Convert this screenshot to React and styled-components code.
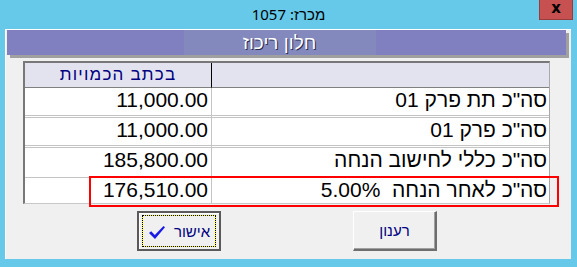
import styled, { createGlobalStyle } from 'styled-components';

const rows = [
    { label: 'סה"כ תת פרק 01', value: '11,000.00', line: 'double' },
    { label: 'סה"כ פרק 01', value: '11,000.00', line: 'double' },
    { label: 'סה"כ כללי לחישוב הנחה', value: '185,800.00', line: 'single' },
    { label: 'סה"כ לאחר הנחה  5.00%', value: '176,510.00', line: 'none' },
];

export default function App() {
    return (
        <Window>
            <GlobalStyle />
            <TitleBar>
                <span />
                <Title>מכרז: 1057</Title>
                <CloseButton>x</CloseButton>
            </TitleBar>
            <Client>
                <Banner>
                    <BannerLabel>חלון ריכוז</BannerLabel>
                </Banner>
                <GridWrap>
                    <Grid>
                        <HeadCell />
                        <HeadCell $value>בכתב הכמויות</HeadCell>
                        {rows.map((r, i) => [
                            <LabelCell key={'l' + i} $line={r.line} $last={i === rows.length - 1}>{r.label}</LabelCell>,
                            <ValueCell key={'v' + i} $line={r.line} $last={i === rows.length - 1}>{r.value}</ValueCell>,
                        ])}
                    </Grid>
                    <Highlight />
                </GridWrap>
                <Buttons>
                    <Button $default>
                        <Focus>
                            <span>אישור</span>
                            <svg width="18" height="15" viewBox="0 0 18 15">
                                <path d="M1 8 L3.2 6.3 L6.8 10 L15.5 1 L17 2.2 L7 14 Z" fill="#1a1ae6" />
                            </svg>
                        </Focus>
                    </Button>
                    <Button>רענון</Button>
                </Buttons>
            </Client>
        </Window>
    );
}

const GlobalStyle = createGlobalStyle`
    body {
        margin: 0;
        background: #66c9ea;
        font-family: "Liberation Sans", Arial, sans-serif;
    }
`;

const Window = styled.div`
    width: 577px;
    height: 267px;
    background: #66c9ea;
    direction: rtl;
    overflow: hidden;
`;

const TitleBar = styled.div`
    height: 29px;
    display: grid;
    grid-template-columns: 1fr auto 1fr;
    direction: ltr;
`;

const Title = styled.div`
    direction: rtl;
    font-size: 15px;
    color: #000;
    line-height: 28px;
    font-family: "Noto Sans", "Liberation Sans", sans-serif;
`;

const CloseButton = styled.div`
    justify-self: end;
    align-self: start;
    margin-right: 4px;
    width: 34px;
    height: 20px;
    box-sizing: border-box;
    background: #c75050;
    border: 1px solid #9a3c3c;
    border-top: none;
    color: #000;
    font: bold 15px "DejaVu Sans", sans-serif;
    text-align: center;
    line-height: 17px;
`;

const Client = styled.div`
    margin: 0 6px 0 5px;
    height: 229px;
    background: #f0f0f0;
    border-top: 1px solid #fff;
    border-left: 1px solid #fff;
    direction: ltr;
`;

const Banner = styled.div`
    margin: 0 5px 0 1px;
    height: 25px;
    background: #8080c0;
    box-shadow: 3px 3px 0 #a0a0a0;
    display: flex;
    justify-content: center;
`;

const BannerLabel = styled.div`
    width: 192px;
    margin-right: 14px;
    background: #8489bd;
    color: #fff;
    text-align: center;
    direction: rtl;
    font-size: 19px;
    line-height: 25px;
    text-shadow: 1px 1px 0 #2a2a50;
`;

const GridWrap = styled.div`
    position: relative;
    margin: 6px 21px 0 17px;
`;

const Grid = styled.div`
    direction: rtl;
    display: grid;
    grid-template-columns: 338px 1fr;
    border-style: solid;
    border-width: 2px 1px 1px 2px;
    border-color: #787878 #a8a8a8 #c8c8c8 #787878;
    background: #fff;
`;

const HeadCell = styled.div`
    height: 24px;
    background: #e3e3f0;
    border-bottom: 1px solid #808080;
    border-left: ${p => (p.$value ? 'none' : '1px solid #000')};
    color: #000080;
    font-size: 17px;
    letter-spacing: 1.2px;
    line-height: 24px;
    text-align: center;
`;

const lineStyle = {
    double: '3px double #c4c4c4',
    single: '1px solid #c4c4c4',
    none: 'none',
};

const Cell = styled.div`
    height: ${p => (p.$last ? '25px' : p.$line === 'double' ? '27px' : '29px')};
    border-bottom: ${p => lineStyle[p.$line]};
    font-size: 21px;
    line-height: 24px;
    color: #000;
    white-space: pre;
    overflow: hidden;
`;

const LabelCell = styled(Cell)`
    padding-right: 2px;
    border-left: 1px solid #c4c4c4;
`;

const ValueCell = styled(Cell)`
    padding-right: 3px;
`;

const Highlight = styled.div`
    position: absolute;
    left: 66px;
    right: -9px;
    top: 115px;
    height: 27px;
    border: 2px solid #f00;
`;

const Buttons = styled.div`
    display: flex;
    gap: 132px;
    padding-left: 131px;
    margin-top: 7px;
`;

const Button = styled.div`
    width: 84px;
    height: 40px;
    box-sizing: border-box;
    background: #f0f0f0;
    border-style: solid;
    border-width: ${p => (p.$default ? '2px' : '1px 2px 2px 1px')};
    border-color: ${p => (p.$default ? '#5a5a5a' : '#fff #6e6e6e #6e6e6e #fff')};
    box-shadow: ${p => (p.$default ? 'inset 1px 1px 0 #fff' : 'inset -1px -1px 0 #a0a0a0')};
    color: #000080;
    font-size: 15px;
    direction: rtl;
    display: flex;
    align-items: center;
    justify-content: center;
    padding: ${p => (p.$default ? '1px' : '0')};
`;

const Focus = styled.div`
    flex: 1;
    align-self: stretch;
    margin: 1px 2px;
    border: 1px dotted #000;
    background: linear-gradient(#f0f0f0, #f0f0f0) padding-box, #ffff00 border-box;
    display: flex;
    align-items: center;
    justify-content: center;
    gap: 8px;
    svg {
        margin-top: 2px;
    }
`;
